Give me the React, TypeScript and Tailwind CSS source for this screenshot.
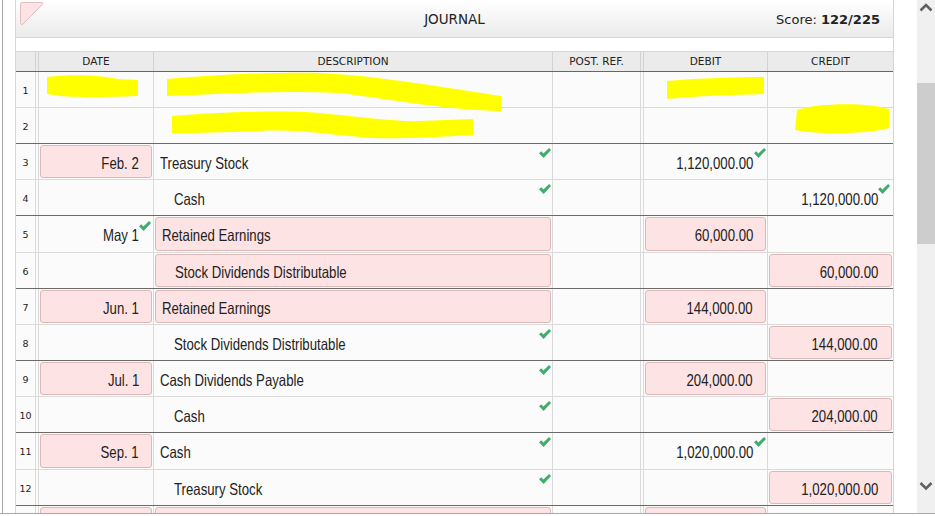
import React from "react";

type R = {
  n?: number;
  date?: string;
  datePink?: boolean;
  dateCheck?: boolean;
  desc?: string;
  descPink?: boolean;
  indent?: boolean;
  descCheck?: boolean;
  debit?: string;
  debitPink?: boolean;
  debitCheck?: boolean;
  credit?: string;
  creditPink?: boolean;
  creditCheck?: boolean;
  dark?: boolean;
  tall?: boolean;
};

const rows: R[] = [
  { n: 1 },
  { n: 2, dark: true },
  { n: 3, date: "Feb. 2", datePink: true, desc: "Treasury Stock", descCheck: true, debit: "1,120,000.00", debitCheck: true },
  { n: 4, desc: "Cash", indent: true, descCheck: true, credit: "1,120,000.00", creditCheck: true, dark: true },
  { n: 5, date: "May 1", dateCheck: true, desc: "Retained Earnings", descPink: true, debit: "60,000.00", debitPink: true, tall: true },
  { n: 6, desc: "Stock Dividends Distributable", descPink: true, indent: true, credit: "60,000.00", creditPink: true, dark: true },
  { n: 7, date: "Jun. 1", datePink: true, desc: "Retained Earnings", descPink: true, debit: "144,000.00", debitPink: true },
  { n: 8, desc: "Stock Dividends Distributable", indent: true, descCheck: true, credit: "144,000.00", creditPink: true, dark: true },
  { n: 9, date: "Jul. 1", datePink: true, desc: "Cash Dividends Payable", descCheck: true, debit: "204,000.00", debitPink: true },
  { n: 10, desc: "Cash", indent: true, descCheck: true, credit: "204,000.00", creditPink: true, dark: true },
  { n: 11, date: "Sep. 1", datePink: true, desc: "Cash", descCheck: true, debit: "1,020,000.00", debitCheck: true, tall: true },
  { n: 12, desc: "Treasury Stock", indent: true, descCheck: true, credit: "1,020,000.00", creditPink: true, dark: true },
  { date: "", datePink: true, desc: "", descPink: true, debit: "", debitPink: true },
];

function Check({ pos }: { pos: string }) {
  return (
    <svg className={`absolute ${pos}`} width="12" height="10" viewBox="0 0 12 10">
      <polygon points="0,5.3 2.3,3.3 4.4,5.6 10.1,0 12,1.9 4.6,9.9" fill="#41ad6d" />
    </svg>
  );
}

function Cell({
  width,
  border,
  pink,
  text,
  align,
  origin,
  check,
  checkPos,
}: {
  width: string;
  border: boolean;
  pink?: boolean;
  text?: string;
  align: string;
  origin: string;
  check?: boolean;
  checkPos?: string;
}) {
  return (
    <div className={`relative shrink-0 h-full p-[1px] ${width} ${border ? "border-r border-[#dadada]" : ""}`}>
      <div
        className={`h-full flex items-center pt-[3px] rounded-[3px] border whitespace-nowrap ${
          pink ? "bg-[#fde3e3] border-[#dbb9b9]" : "border-transparent"
        } ${align}`}
      >
        {text ? <span className={`inline-block scale-x-80 ${origin}`}>{text}</span> : null}
      </div>
      {check && <Check pos={checkPos || "right-[1px] top-[4px]"} />}
    </div>
  );
}

function Row({ r }: { r: R }) {
  const descPad = r.indent
    ? r.descPink
      ? "pl-[19px]"
      : "pl-[18px]"
    : r.descPink
    ? "pl-[6px]"
    : "pl-[4px]";
  return (
    <div
      className={`flex shrink-0 border-b bg-[#fbfbfb] ${r.tall ? "h-[37px]" : "h-[36px]"} ${
        r.dark ? "border-[#6a6a6a]" : "border-[#dadada]"
      }`}
    >
      <div className="w-[20px] shrink-0 border-r border-[#dadada] flex items-center justify-center pt-[3px] text-[9.5px] text-[#222] font-['DejaVu_Sans',sans-serif]">
        {r.n}
      </div>
      <div className="w-[3px] shrink-0 border-r border-[#dadada]" />
      <Cell width="w-[115px]" border pink={r.datePink} text={r.date} align="justify-end pr-[12px]" origin="origin-right" check={r.dateCheck} checkPos="right-[2px] top-[5px]" />
      <Cell width="w-[399px]" border pink={r.descPink} text={r.desc} align={`justify-start ${descPad}`} origin="origin-left" check={r.descCheck} />
      <Cell width="w-[88px]" border align="" origin="" />
      <div className="w-[3px] shrink-0 border-r border-[#dadada]" />
      <Cell width="w-[124px]" border pink={r.debitPink} text={r.debit} align="justify-end pr-[12px]" origin="origin-right" check={r.debitCheck} />
      <Cell width="w-[125px]" border={false} pink={r.creditPink} text={r.credit} align="justify-end pr-[13px]" origin="origin-right" check={r.creditCheck} checkPos="right-[3px] top-[4px]" />
    </div>
  );
}

function HeadCell({ width, label, border = true }: { width: string; label: string; border?: boolean }) {
  return (
    <div className={`shrink-0 h-full flex items-center justify-center ${width} ${border ? "border-r border-[#d2d2d2]" : ""}`}>
      {label}
    </div>
  );
}

export default function App() {
  return (
    <div className="relative w-[935px] h-[516px] bg-white overflow-hidden">
      <div className="flex h-[514px] border-b border-[#a8a8a8]">
        <div className="w-[915px] ml-[2px] border-l border-[#a8a8a8] pl-[12px] overflow-hidden">
          <div className="w-[879px] h-full border-x border-[#d6d6d6] flex flex-col font-['Liberation_Sans','Arial',sans-serif] text-[16.5px] text-[#222]">
            {/* title bar */}
            <div className="relative h-[38px] shrink-0 border-b border-[#d6d6d6] bg-linear-to-b from-[#ffffff] to-[#ebebeb] flex items-center justify-center font-['DejaVu_Sans',sans-serif] text-[13.5px] text-[#222]">
              <svg className="absolute left-[3px] top-[1px]" width="26" height="25" viewBox="0 0 26 25">
                <path
                  d="M3 1.5 L22 1.5 Q25 1.5 23 3.8 L4.2 22.8 Q1.5 25 1.5 21.5 L1.5 3 Q1.5 1.5 3 1.5 Z"
                  fill="#fde3e3"
                  stroke="#e3bfbf"
                  strokeWidth="1"
                />
              </svg>
              <span className="pt-[2px]">JOURNAL</span>
              <div className="absolute right-[13px] top-0 h-full flex items-center text-[13px] pt-[2px]">
                <span>Score:&nbsp;</span>
                <span className="font-bold">122/225</span>
              </div>
            </div>
            {/* spacer band */}
            <div className="h-[14px] shrink-0 border-b border-[#d6d6d6] bg-white" />
            {/* header row */}
            <div className="flex h-[20px] shrink-0 bg-[#ebebeb] border-b border-[#666] font-['DejaVu_Sans',sans-serif] text-[10.5px] text-[#222]">
              <HeadCell width="w-[20px]" label="" />
              <HeadCell width="w-[3px]" label="" />
              <HeadCell width="w-[115px]" label="DATE" />
              <HeadCell width="w-[399px]" label="DESCRIPTION" />
              <HeadCell width="w-[88px]" label="POST. REF." />
              <HeadCell width="w-[3px]" label="" />
              <HeadCell width="w-[124px]" label="DEBIT" />
              <HeadCell width="w-[125px]" label="CREDIT" border={false} />
            </div>
            {rows.map((r, i) => (
              <Row key={i} r={r} />
            ))}
          </div>
        </div>
        {/* scrollbar */}
        <div className="relative w-[18px] shrink-0 bg-[#f0f0f0] flex flex-col">
          <div className="h-[17px] flex items-start justify-center pt-[2px]">
            <svg width="14" height="10" viewBox="0 0 14 10">
              <path d="M1.5 8.5 L7 3 L12.5 8.5" fill="none" stroke="#606060" strokeWidth="2.6" />
            </svg>
          </div>
          <div className="mt-[66px] h-[161px] bg-[#cdcdcd]" />
          <div className="flex-1" />
          <div className="h-[32px] flex items-start justify-center">
            <svg width="14" height="10" viewBox="0 0 14 10">
              <path d="M1.5 2 L7 7.5 L12.5 2" fill="none" stroke="#606060" strokeWidth="2.6" />
            </svg>
          </div>
        </div>
      </div>
      {/* yellow redaction marks */}
      <svg className="absolute inset-0 pointer-events-none" width="935" height="516" viewBox="0 0 935 516">
        <g fill="#ffff00">
          <path d="M47,77 C70,74 100,75 118,79 L138,80 L138,96 C110,97 80,98 60,96 L47,94 Z" />
          <path d="M167,79 C200,76 260,72 320,73 C380,76 440,87 501,96 L501,111 C450,110 400,101 340,93 C280,90 220,94 167,96 Z" />
          <path d="M172,116 C220,112 280,110 320,113 C360,117 400,122 420,121 L473,119 L473,135 C440,137 400,139 370,138 C330,135 300,129 260,131 C230,132 200,133 172,133 Z" />
          <path d="M667,81 C700,78 740,77 764,77 L764,94 C730,95 700,96 667,99 Z" />
          <path d="M797,110 C815,103 868,102 889,109 L889,128 C868,134 820,135 795,130 Z" />
        </g>
      </svg>
    </div>
  );
}
